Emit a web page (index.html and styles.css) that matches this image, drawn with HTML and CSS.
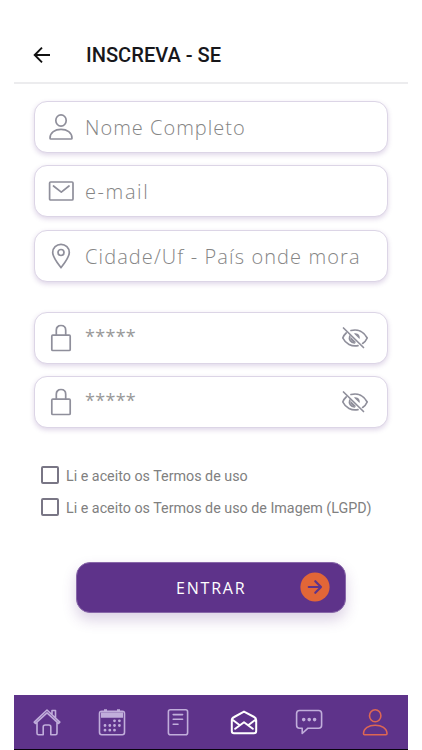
FILE: index.html
```html
<!DOCTYPE html>
<html lang="pt-BR">
<head>
    <meta charset="UTF-8">
    <meta name="viewport" content="width=device-width, initial-scale=1.0">
    <title>Inscreva-se</title>
    <link rel="stylesheet" href="styles.css">
</head>
<body>
    <div class="app">
        <header class="header">
            <svg class="back" viewBox="0 0 18 18"><path d="M17 9H2M9 1.7L1.7 9L9 16.3"/></svg>
            <h1>INSCREVA - SE</h1>
        </header>

        <main class="content">
            <div class="group">
                <div class="field">
                    <svg class="icon" viewBox="0 0 28 28"><ellipse cx="14" cy="7.5" rx="5.2" ry="5.6"/><path d="M3 25.2C3 19.5 8 16.4 14 16.4S25 19.5 25 25.2Q25 26 24 26H4Q3 26 3 25.2Z"/></svg>
                    <span class="nome">Nome Completo</span>
                </div>
                <div class="field">
                    <svg class="icon" viewBox="0 0 28 28"><rect x="2.6" y="5" width="23.4" height="18" rx="1"/><path d="M6.5 9L14.3 15.2L22 9"/></svg>
                    <span class="email">e-mail</span>
                </div>
                <div class="field">
                    <svg class="icon" viewBox="0 0 28 28"><path d="M14 25.7C12.5 23.5 5.7 15.8 5.7 10.5C5.7 5.8 9.4 2.4 14 2.4S22.3 5.8 22.3 10.5C22.3 15.8 15.5 23.5 14 25.7Z"/><circle cx="14" cy="10.5" r="3"/></svg>
                    <span class="cidade">Cidade/Uf - País onde mora</span>
                </div>
            </div>

            <div class="group">
                <div class="field">
                    <svg class="icon" viewBox="0 0 28 28"><rect x="4.8" y="11.2" width="18.4" height="15.3" rx="1"/><path d="M9.3 11V6.2C9.3 3.4 11.2 1.5 14 1.5S18.7 3.4 18.7 6.2V11"/></svg>
                    <span class="senha">*****</span>
                    <svg class="eye" viewBox="0 0 28 24"><path d="M2.5 2L22.5 21.5M10 4.5C17 2.7 23 6 26.2 12C25.2 14.3 23.6 16.2 21.6 17.4M5.2 7C3.8 8.2 2.5 10 1.8 12C4.6 17.8 10.5 20.8 17 19.6"/><path d="M8.8 10C7.6 13.5 9.8 16.6 13.5 17"/><path class="fill" d="M9.6 10.8L15.2 16.2C12.4 17.3 8.8 14.6 9.6 10.8ZM13 7.4C16.6 6.3 19.8 9.5 18.5 13.1L15.7 10.3Z"/></svg>
                </div>
                <div class="field">
                    <svg class="icon" viewBox="0 0 28 28"><rect x="4.8" y="11.2" width="18.4" height="15.3" rx="1"/><path d="M9.3 11V6.2C9.3 3.4 11.2 1.5 14 1.5S18.7 3.4 18.7 6.2V11"/></svg>
                    <span class="senha">*****</span>
                    <svg class="eye" viewBox="0 0 28 24"><path d="M2.5 2L22.5 21.5M10 4.5C17 2.7 23 6 26.2 12C25.2 14.3 23.6 16.2 21.6 17.4M5.2 7C3.8 8.2 2.5 10 1.8 12C4.6 17.8 10.5 20.8 17 19.6"/><path d="M8.8 10C7.6 13.5 9.8 16.6 13.5 17"/><path class="fill" d="M9.6 10.8L15.2 16.2C12.4 17.3 8.8 14.6 9.6 10.8ZM13 7.4C16.6 6.3 19.8 9.5 18.5 13.1L15.7 10.3Z"/></svg>
                </div>
            </div>

            <div class="terms">
                <label><input type="checkbox"><span>Li e aceito os Termos de uso</span></label>
                <label><input type="checkbox"><span>Li e aceito os Termos de uso de Imagem (LGPD)</span></label>
            </div>

            <button class="enter" type="button">
                <span>ENTRAR</span>
                <svg viewBox="0 0 30 30"><circle cx="15" cy="15" r="14.6"/><path d="M8.8 15H21M15.3 9.2L21 15L15.3 20.8"/></svg>
            </button>
        </main>

        <nav class="nav">
            <a><svg viewBox="0 0 28 28"><path d="M1.2 14.2L14 2L26.8 14.2L25.5 15.4L14 4.8L2.5 15.4ZM4 14.5V25.2Q4 26.7 5.5 26.7H10.2V19Q10.2 17 12.2 17H15.8Q17.8 17 17.8 19V26.7H22.5Q24 26.7 24 25.2V14.5M19 6.2V2.5H22.5V9.5"/></svg></a>
            <a><svg viewBox="0 0 28 28"><rect x="1.5" y="3.2" width="25" height="23.5" rx="2.2"/><path class="fill" d="M3 4.2H25V9.7H3ZM6 1.2H9V4H6ZM19 1.2H22V4H19Z"/><path class="dots" d="M16.5 12.8h.01M21.4 12.8h.01M7 17.5h.01M11.8 17.5h.01M16.5 17.5h.01M21.4 17.5h.01M7 22.2h.01M11.8 22.2h.01M16.5 22.2h.01"/></svg></a>
            <a><svg viewBox="0 0 28 28"><rect x="4.4" y="1.7" width="19.2" height="25" rx="2"/><path d="M9.2 6.6H18.6M9.2 11.3H18.6M9.2 16.2H14"/></svg></a>
            <a class="white"><svg viewBox="0 0 28 28"><path d="M4.2 9L14 3.6L24.2 9Q26.2 10 26.2 12.2V23Q26.2 25.2 24 25.2H4Q1.8 25.2 1.8 23V12.2Q1.8 10 4.2 9ZM2.2 11.5L9.8 17.2M25.8 11.5L18.2 17.2M5.2 20.8L14 14.2L22.8 20.8"/></svg></a>
            <a><svg viewBox="0 0 28 28"><path d="M4.6 2.5H23.6Q26.6 2.5 26.6 5.5V17.2Q26.6 20.2 23.6 20.2H13L7.2 25.5V20.2H4.6Q1.6 20.2 1.6 17.2V5.5Q1.6 2.5 4.6 2.5Z"/><path class="dots big" d="M8.7 11.6h.01M14.2 11.6h.01M19.6 11.6h.01"/></svg></a>
            <a class="active"><svg viewBox="0 0 28 28"><ellipse cx="14.2" cy="7.7" rx="5.7" ry="6"/><path d="M2.5 25.7C2.5 20 8 17.2 14.2 17.2S26 20 26 25.7Q26 26.7 25 26.7H3.5Q2.5 26.7 2.5 25.7Z"/></svg></a>
        </nav>
    </div>
</body>
</html>
```
FILE: styles.css
```css
* {
    box-sizing: border-box;
}

body {
    margin: 0;
    background: #fff;
    font-family: Roboto, sans-serif;
}

svg {
    flex-shrink: 0;
    fill: none;
    stroke: currentColor;
    stroke-width: 1.7;
    stroke-linecap: round;
    stroke-linejoin: round;
}

.fill {
    fill: currentColor;
    stroke: none;
}

.app {
    display: flex;
    flex-direction: column;
    width: 394px;
    height: 750px;
    margin: 0 auto;
}

.header {
    display: flex;
    align-items: center;
    height: 84px;
    padding: 28px 19px 0;
    border-bottom: 2px solid #ececee;
}

.back {
    width: 18px;
    height: 18px;
    margin-right: 35px;
    color: #111;
    stroke-width: 1.9;
    stroke-linecap: butt;
    stroke-linejoin: miter;
}

h1 {
    margin: 0;
    color: #17171b;
    font-size: 20.1px;
    font-weight: 500;
}

.content {
    flex: 1;
    padding: 17px 20px 0;
}

.group {
    display: flex;
    flex-direction: column;
    gap: 12.4px;
    margin-bottom: 30.2px;
}

.field {
    display: flex;
    align-items: center;
    height: 52px;
    padding: 0 18px 0 12px;
    border: 1px solid #dcd5e6;
    border-radius: 13px;
    background: #fff;
    box-shadow: 0 2px 5px rgba(94, 51, 138, 0.2);
    color: #858585;
    font-family: "Open Sans", sans-serif;
    font-size: 20px;
    font-weight: 300;
    white-space: nowrap;
}

.field span {
    flex: 1;
    margin-left: 10px;
    padding-top: 2px;
    line-height: 28px;
}

.nome {
    letter-spacing: 1px;
}

.email {
    letter-spacing: 1.6px;
}

.cidade {
    letter-spacing: 1.1px;
}

.field .senha {
    padding: 0 0 4px;
    color: #999;
    font-size: 18px;
    font-weight: 400;
    letter-spacing: 0.3px;
}

.icon {
    width: 28px;
    height: 28px;
    color: #8f8f9b;
}

.eye {
    width: 28px;
    height: 24px;
    color: #8f8f9b;
}

.terms {
    display: flex;
    flex-direction: column;
    gap: 14px;
    padding: 7px 0 0 7px;
}

.terms label {
    display: flex;
    align-items: center;
    height: 18px;
    color: #808080;
    font-size: 14.3px;
    white-space: nowrap;
}

.terms span {
    padding-top: 2px;
}

.terms input {
    appearance: none;
    width: 18px;
    height: 18px;
    margin: 0 7px 0 0;
    border: 2px solid #797685;
    border-radius: 2px;
}

.enter {
    display: flex;
    align-items: center;
    width: 270px;
    height: 51px;
    margin: 46px auto 0;
    padding: 0 15px 0 99px;
    border: 1px solid #8867a9;
    border-radius: 14px;
    background: #5e338a;
    box-shadow: 0 7px 14px rgba(94, 51, 138, 0.22);
    color: #fff;
    font-family: "Open Sans", sans-serif;
    font-size: 16px;
    letter-spacing: 1.8px;
}

.enter span {
    flex: 1;
    padding-top: 1px;
    text-align: left;
}

.enter svg {
    width: 30px;
    height: 30px;
    color: #5e338a;
    stroke-width: 2.2;
}

.enter circle {
    fill: #e26637;
    stroke: none;
}

.nav {
    display: grid;
    grid-template-columns: repeat(6, 1fr);
    align-items: center;
    height: 55px;
    border-bottom: 1.5px solid #08020f;
    background: #5e338a;
    color: #c1aedb;
}

.nav a {
    display: flex;
    justify-content: center;
}

.nav svg {
    width: 28px;
    height: 28px;
    stroke-width: 1.6;
}

.nav .white {
    color: #fff;
}

.nav .white svg {
    stroke-width: 2;
}

.nav .active {
    color: #dd6753;
}

.nav .dots {
    stroke-width: 2.8;
}

.nav .big {
    stroke-width: 3.6;
}
```
